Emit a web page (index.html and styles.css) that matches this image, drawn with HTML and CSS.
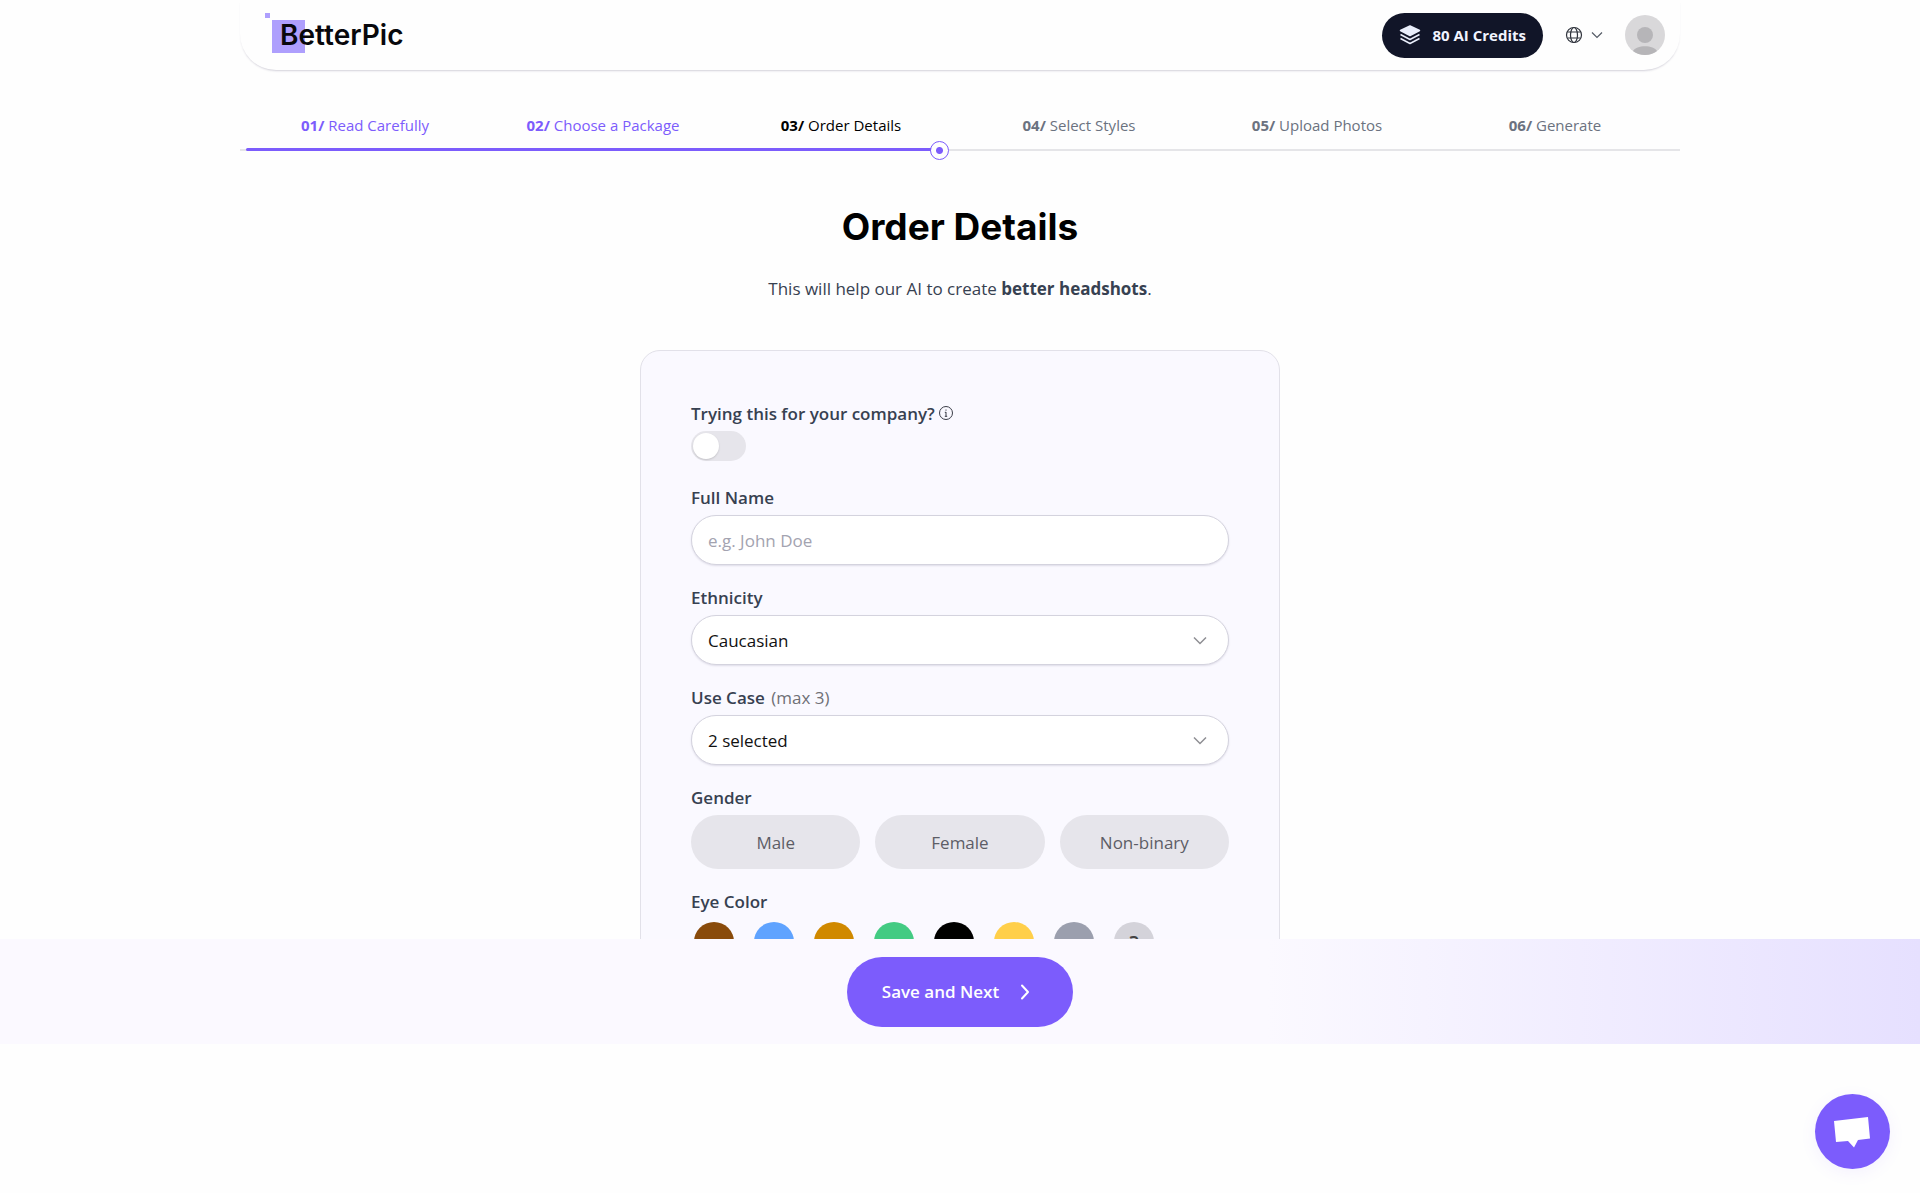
FILE: index.html
```
<!DOCTYPE html>
<html lang="en">
<head>
  <meta charset="UTF-8" />
  <meta name="viewport" content="width=device-width, initial-scale=1.0" />
  <title>Order Details | BetterPic</title>
  <link rel="stylesheet" href="styles.css">
</head>
<body>

<div class="page">
  <header class="navbar">
    <a href="#" class="logo"><span class="logo-dot"></span>BetterPic</a>
    <div class="nav-right">
      <a href="#" class="credits">
        <svg width="22" height="22" viewBox="0 0 22 22" fill="none" stroke="#e9eefb" stroke-width="1.5" stroke-linejoin="round">
          <path d="M11 2 20.500 6.500 11 11.500 1.500 6.500Z" fill="#e9eefb" />
          <path d="M1.500 10.500 11 15.500 20.500 10.500" />
          <path d="M1.500 14.500 11 19.500 20.500 14.500" />
        </svg>
        80 AI Credits
      </a>
      <button class="lang" aria-label="Language">
        <svg width="18" height="18" viewBox="0 0 18 18" fill="none" stroke="#30343d" stroke-width="1.2">
          <circle cx="9" cy="9" r="7.500" />
          <ellipse cx="9" cy="9" rx="3.500" ry="7.500" />
          <path d="M2.500 6h13M2.500 12h13" />
        </svg>
        <svg width="12" height="8" viewBox="0 0 12 8" fill="none" stroke="#555b66" stroke-width="1.2">
          <path d="M1 1.500l5 5 5-5" />
        </svg>
      </button>
      <button class="avatar" aria-label="Account">
        <svg width="40" height="40" viewBox="0 0 40 40">
          <circle cx="20" cy="20" r="20" fill="#d9d8da" />
          <circle cx="20" cy="20" r="8" fill="#b6b5b8" />
          <path d="M8 36C11 29.500 29 29.500 32 36A20 20 0 0 1 8 36Z" fill="#b6b5b8" />
        </svg>
      </button>
    </div>
  </header>

  <nav class="steps">
    <ol>
      <li class="done"><b>01/</b> Read Carefully</li>
      <li class="done"><b>02/</b> Choose a Package</li>
      <li class="current"><b>03/</b> Order Details</li>
      <li><b>04/</b> Select Styles</li>
      <li><b>05/</b> Upload Photos</li>
      <li><b>06/</b> Generate</li>
    </ol>
    <div class="track"><div class="track-fill"></div></div>
  </nav>

  <main>
    <h1>Order Details</h1>
    <p class="intro">This will help our AI to create <b>better headshots</b>.</p>

    <form class="card" id="orderForm">
      <div class="field">
        <label for="company">Trying this for your company?
          <svg width="14" height="14" viewBox="0 0 14 14" fill="none" stroke="#3a3d47">
            <circle cx="7" cy="7" r="6.500" />
            <path d="M7 6v4.500M7 3.500v1.200M5.800 6.300H7M5.800 10.300h2.400" />
          </svg>
        </label>
        <input type="checkbox" id="company" class="toggle" />
      </div>

      <div class="field">
        <label for="fullName">Full Name</label>
        <input type="text" id="fullName" class="control" placeholder="e.g. John Doe" />
      </div>

      <div class="field">
        <label for="ethnicity">Ethnicity</label>
        <div class="select">
          <select id="ethnicity" class="control">
            <option>Caucasian</option>
          </select>
          <svg width="14" height="9" viewBox="0 0 14 9" fill="none" stroke="#8e8e93" stroke-width="1.5"><path d="M1 1.500l6 6 6-6" /></svg>
        </div>
      </div>

      <div class="field">
        <label for="useCase">Use Case <span>(max 3)</span></label>
        <div class="select">
          <select id="useCase" class="control">
            <option>2 selected</option>
          </select>
          <svg width="14" height="9" viewBox="0 0 14 9" fill="none" stroke="#8e8e93" stroke-width="1.5"><path d="M1 1.500l6 6 6-6" /></svg>
        </div>
      </div>

      <div class="field" role="group" aria-labelledby="genderLabel">
        <div class="label" id="genderLabel">Gender</div>
        <div class="genders">
          <button type="button">Male</button>
          <button type="button">Female</button>
          <button type="button">Non-binary</button>
        </div>
      </div>

      <div class="field" role="group" aria-labelledby="eyeLabel">
        <div class="label" id="eyeLabel">Eye Color</div>
        <div class="eyes">
          <button type="button" class="brown" aria-label="Brown"></button>
          <button type="button" class="blue" aria-label="Blue"></button>
          <button type="button" class="hazel" aria-label="Hazel"></button>
          <button type="button" class="green" aria-label="Green"></button>
          <button type="button" class="black" aria-label="Black"></button>
          <button type="button" class="amber" aria-label="Amber"></button>
          <button type="button" class="gray" aria-label="Gray"></button>
          <button type="button" class="other">?</button>
        </div>
      </div>
    </form>
  </main>
</div>

<footer class="action-bar">
  <button type="submit" form="orderForm">
    Save and Next
    <svg width="10" height="16" viewBox="0 0 10 16" fill="none" stroke="#fff" stroke-width="2" stroke-linecap="round" stroke-linejoin="round"><path d="M2 1.500 8 8l-6 6.500" /></svg>
  </button>
</footer>

<button class="chat" aria-label="Open chat">
  <svg width="38" height="32" viewBox="1 0 38 32" fill="#fff"><path d="M1 5 35 1l2 21.500-12 1.500-4 7.500-6-6.500-12 1Z" /></svg>
</button>

</body>
</html>
```

FILE: styles.css
```
:root {
  --accent: #7c5cfc;
  --text: #374151;
  --panel: #faf9ff;
}

* {
  box-sizing: border-box;
}

body {
  background: #fefefe;
  color: var(--text);
  font-family: "Open Sans", "Noto Sans", sans-serif;
  font-size: 17px;
  display: flex;
  flex-direction: column;
  height: 100vh;
  margin: 0;
  padding-bottom: 149px;
}

button {
  border: none;
  background: none;
  padding: 0;
  font: inherit;
  cursor: pointer;
}

.page {
  flex: 1;
  min-height: 0;
  overflow: hidden;
}

/* top bar */
.navbar {
  display: flex;
  justify-content: space-between;
  align-items: center;
  max-width: 1440px;
  height: 70px;
  margin: 0 auto;
  padding: 0 15px 0 40px;
  border-radius: 0 0 36px 36px;
  box-shadow: 0 2px 2px -1px rgba(60, 50, 90, 0.22);
}

.logo {
  position: relative;
  color: #08080c;
  font-family: Inter, sans-serif;
  font-size: 28px;
  font-weight: 600;
  line-height: 34px;
  text-decoration: none;
}

.logo::before {
  content: "";
  position: absolute;
  left: -8px;
  top: 2px;
  width: 33px;
  height: 33px;
  background: #ae9ffd;
  z-index: -1;
}

.logo-dot {
  position: absolute;
  left: -15px;
  top: -5px;
  width: 5px;
  height: 5px;
  background: #ae9ffd;
}

.nav-right {
  display: flex;
  align-items: center;
  gap: 22px;
}

.credits {
  display: flex;
  align-items: center;
  gap: 11px;
  height: 45px;
  padding: 0 17px;
  border-radius: 23px;
  background: #111528;
  color: #f1f4ff;
  font-size: 15px;
  font-weight: 700;
  text-decoration: none;
}

.lang {
  display: flex;
  align-items: center;
  gap: 8px;
}

.avatar {
  display: flex;
}

/* step progress */
.steps {
  max-width: 1440px;
  margin: 0 auto;
  padding-top: 38px;
}

.steps ol {
  display: grid;
  grid-template-columns: repeat(6, 1fr);
  list-style: none;
  margin: 0;
  padding: 0 6px;
  color: #6b7280;
  font-size: 15px;
  line-height: 34px;
  text-align: center;
}

.steps .done {
  color: var(--accent);
}

.steps .current {
  color: #000;
}

.track {
  margin-top: 6px;
  padding-left: 6px;
  background: linear-gradient(#e5e5e8, #e5e5e8) no-repeat center / 100% 2px;
}

.track-fill {
  position: relative;
  width: 48.5%;
  height: 3px;
  border-radius: 2px;
  background: var(--accent);
}

.track-fill::after {
  content: "";
  position: absolute;
  right: -8px;
  top: -7px;
  width: 17px;
  height: 17px;
  border: 1px solid var(--accent);
  border-radius: 50%;
  background: radial-gradient(circle, var(--accent) 3px, #fefefe 4px);
}

/* form */
h1 {
  margin: 52px 0 0;
  color: #000;
  font-family: Inter, sans-serif;
  font-size: 37px;
  font-weight: 700;
  line-height: 48px;
  text-align: center;
}

.intro {
  margin: 26px 0 49px;
  line-height: 24px;
  text-align: center;
}

.card {
  max-width: 640px;
  margin: 0 auto;
  padding: 46px 50px;
  border: 1px solid #e2e1e9;
  border-radius: 20px;
  background: var(--panel);
}

.field {
  margin-bottom: 16px;
}

.field label,
.field .label {
  display: block;
  font-size: 17px;
  font-weight: 600;
  line-height: 34px;
}

.field label span {
  margin-left: 2px;
  color: #6f7076;
  font-weight: 400;
}

.toggle {
  appearance: none;
  display: block;
  width: 55px;
  height: 30px;
  margin: 0 0 20px;
  padding: 2px;
  border-radius: 15px;
  background: #e6e5eb;
}

.toggle::before {
  content: "";
  display: block;
  width: 26px;
  height: 26px;
  border-radius: 50%;
  background: #fff;
  box-shadow: 0 1px 2px rgba(0, 0, 0, 0.15);
}

.toggle:checked::before {
  margin-left: auto;
}

.control {
  appearance: none;
  display: block;
  width: 100%;
  height: 50px;
  padding: 0 16px;
  border: 1px solid #d4d3de;
  border-radius: 25px;
  background: #fff;
  box-shadow: 0 1px 2px rgba(60, 50, 90, 0.14);
  color: #111;
  font: 400 17px "Open Sans", "Noto Sans", sans-serif;
}

.control::placeholder {
  color: #a3a3b0;
}

.select {
  position: relative;
}

.select svg {
  position: absolute;
  right: 22px;
  top: 21px;
  pointer-events: none;
}

.genders {
  display: grid;
  grid-template-columns: repeat(3, 1fr);
  gap: 15px;
}

.genders button {
  height: 54px;
  border-radius: 27px;
  background: #e6e5eb;
  color: #5d5d66;
  font-weight: 500;
}

.eyes {
  display: flex;
  gap: 20px;
  padding: 3px;
}

.eyes button {
  width: 40px;
  height: 40px;
  border-radius: 50%;
}

.brown { background: #894b0b; }
.blue { background: #5fa3ff; }
.hazel { background: #d08900; }
.green { background: #43cb83; }
.black { background: #000; }
.amber { background: #ffcf4a; }
.gray { background: #9b9fae; }

.eyes .other {
  background: #d4d3da;
  color: #444;
  font-size: 20px;
  font-weight: 600;
}

/* bottom action bar */
.action-bar {
  display: flex;
  justify-content: center;
  align-items: center;
  height: 105px;
  background: linear-gradient(90deg, #fbf9ff 66%, #e6e0ff);
}

.action-bar button {
  display: flex;
  align-items: center;
  gap: 21px;
  height: 70px;
  padding: 0 43px 0 35px;
  border-radius: 35px;
  background: var(--accent);
  color: #fff;
  font-size: 17px;
  font-weight: 600;
}

.chat {
  position: fixed;
  right: 30px;
  bottom: 24px;
  display: flex;
  justify-content: center;
  align-items: center;
  width: 75px;
  height: 75px;
  border-radius: 50%;
  background: var(--accent);
  box-shadow: 0 4px 16px rgba(124, 92, 252, 0.08);
}
```
